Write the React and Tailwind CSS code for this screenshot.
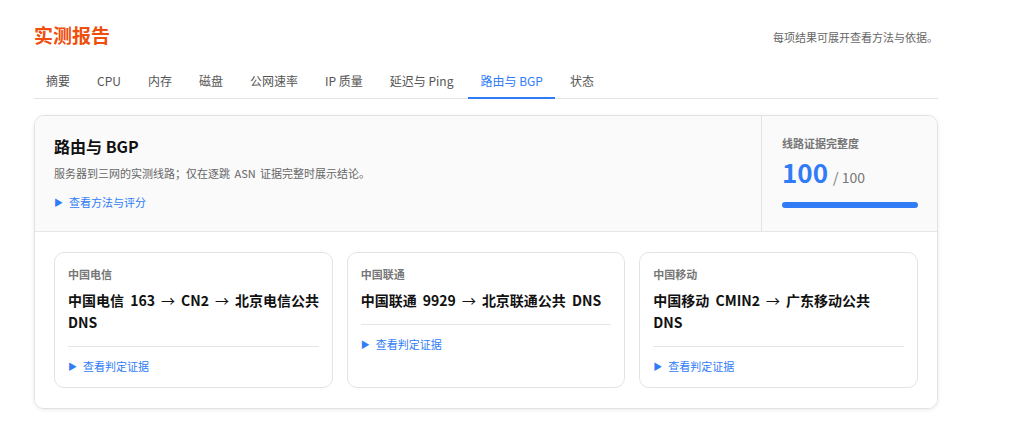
const tabs = ["摘要", "CPU", "内存", "磁盘", "公网速率", "IP 质量", "延迟与 Ping", "路由与 BGP", "状态"];

// each route path is split into its display lines; "→" marks a hop
const routes = [
  { carrier: "中国电信", lines: [["中国电信 163", "CN2", "北京电信公共"], ["DNS"]] },
  { carrier: "中国联通", lines: [["中国联通 9929", "北京联通公共 DNS"]] },
  { carrier: "中国移动", lines: [["中国移动 CMIN2", "广东移动公共"], ["DNS"]] },
];

const Caret = () => <span className="mr-[6px] text-[9px] leading-none text-[#2f7cf6]">▶</span>;

const Arrow = () => (
  <span className="mx-[6px] inline-block w-[14px] text-center font-normal">→</span>
);

const RouteCard = ({ carrier, lines }) => (
  <div className="rounded-[10px] border border-[#e3e3e3] bg-white px-[13px] pt-[13px] pb-[12px]">
    <p className="text-[11px] font-bold leading-4 text-[#777]">{carrier}</p>
    <h4 className="mt-[7px] text-[14px] font-bold leading-[22px] text-[#111] [word-spacing:3px]">
      {lines.map((hops, i) => (
        <span key={i} className="block whitespace-nowrap">
          {hops.map((h, j) => (
            <span key={j}>
              {j > 0 && <Arrow />}
              {h}
            </span>
          ))}
        </span>
      ))}
    </h4>
    <div className="mt-[13px] border-t border-[#e5e5e5] pt-[10px]">
      <a className="flex items-center text-[11px] leading-[18px] text-[#2f7cf6]">
        <Caret />
        查看判定证据
      </a>
    </div>
  </div>
);

export default function App() {
  return (
    <div
      className="min-h-[427px] bg-white pl-[34px] pt-[23px] pb-[20px]"
      style={{ fontFamily: '"Noto Sans CJK SC", "Noto Sans", sans-serif' }}
    >
      <div className="w-[904px]">
        <header className="flex items-center justify-between">
          <h1 className="text-[19px] font-bold leading-6 text-[#f04e0c]">实测报告</h1>
          <p className="mt-[3px] text-[11px] leading-[18px] text-[#666]">每项结果可展开查看方法与依据。</p>
        </header>

        <nav className="mt-[17px] flex gap-[3px] border-b border-[#e4e4e4]">
          {tabs.map((t) => (
            <span
              key={t}
              className={
                t === "路由与 BGP"
                  ? "-mb-px border-b-2 border-[#2f7cf6] px-3 pt-2 pb-[7px] text-[12px] leading-[18px] text-[#2f7cf6]"
                  : "-mb-px border-b-2 border-transparent px-3 pt-2 pb-[7px] text-[12px] leading-[18px] text-[#555]"
              }
            >
              {t}
            </span>
          ))}
        </nav>

        <section className="mt-4 overflow-hidden rounded-[10px] border border-[#e2e2e2] shadow-[0_1px_4px_rgba(0,0,0,0.08)]">
          <div className="flex border-b border-[#e6e6e6] bg-[#fafafa]">
            <div className="flex-1 px-[19px] pt-[18px] pb-5">
              <h3 className="text-[16px] font-bold leading-6 text-[#111]">路由与 BGP</h3>
              <p className="mt-[6px] text-[11px] leading-[18px] text-[#666] [word-spacing:2px]">
                服务器到三网的实测线路；仅在逐跳 ASN 证据完整时展示结论。
              </p>
              <a className="mt-[11px] flex items-center text-[11px] leading-[18px] text-[#2f7cf6]">
                <Caret />
                查看方法与评分
              </a>
            </div>
            <div className="w-[176px] border-l border-[#e4e4e4] px-5 pt-[19px]">
              <p className="text-[11px] font-bold leading-4 text-[#777]">线路证据完整度</p>
              <div className="mt-[5px] flex items-baseline leading-[31px]">
                <span className="text-[26px] font-bold text-[#2f7cf6]">100</span>
                <span className="ml-[5px] text-[14px] text-[#777]">/ 100</span>
              </div>
              <div className="mt-[9px] h-[6px] w-[136px] rounded-full bg-[#2f7cf6]" />
            </div>
          </div>

          <div className="grid grid-cols-3 gap-[14px] bg-white px-[19px] py-5">
            {routes.map((r) => (
              <RouteCard key={r.carrier} {...r} />
            ))}
          </div>
        </section>
      </div>
    </div>
  );
}
